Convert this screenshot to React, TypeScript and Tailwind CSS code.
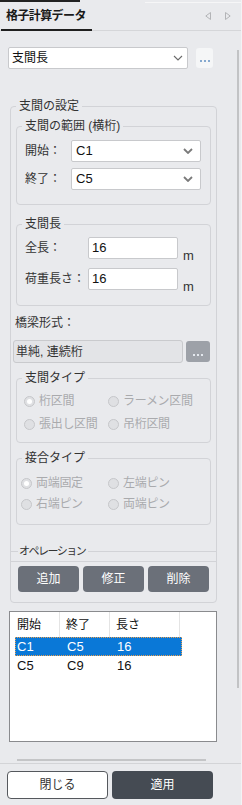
import type { ReactNode } from "react";

const Chevron = ({ bold = false }: { bold?: boolean }) => (
  <svg width="10" height="6" viewBox="0 0 10 6" className="shrink-0">
    <polyline
      points="1,1 5,5 9,1"
      fill="none"
      stroke={bold ? "#7a7a7a" : "#6a6a6a"}
      strokeWidth={bold ? 1.8 : 1.1}
    />
  </svg>
);

const Dots = ({ color }: { color: string }) => (
  <div className="flex gap-[2px]">
    {[0, 1, 2].map((i) => (
      <span key={i} className="block w-[2px] h-[2px]" style={{ backgroundColor: color }} />
    ))}
  </div>
);

function Group({ title, children, className = "" }: { title: string; children: ReactNode; className?: string }) {
  return (
    <fieldset className={`ml-[5px] w-[195px] border border-[#d2d3d7] rounded-[4px] ${className}`}>
      <legend className="ml-[5px] px-[3px] text-[12px] leading-[16px] text-[#333] whitespace-nowrap">{title}</legend>
      {children}
    </fieldset>
  );
}

function Radio({ label, checked = false }: { label: string; checked?: boolean }) {
  return (
    <div className="flex items-center gap-[4px] h-[16px]">
      <span className="w-[11px] h-[11px] rounded-full border border-[#c6c7ca] bg-[#dfe0e3] flex items-center justify-center">
        {checked && <span className="w-[5px] h-[5px] rounded-full bg-white" />}
      </span>
      <span className="text-[12px] leading-[16px] text-[#a9aaad] whitespace-nowrap tracking-[-0.3px]">{label}</span>
    </div>
  );
}

function SelectRow({ label, value }: { label: string; value: string }) {
  return (
    <div className="flex items-center">
      <span className="w-[46px] text-[12px] leading-[16px] text-[#333] whitespace-nowrap">{label}</span>
      <div className="flex-1 h-[22px] bg-white border border-[#c8c9cc] rounded-[2px] flex items-center justify-between pl-[4px] pr-[7px]">
        <span className="text-[13px] leading-[16px] text-[#111]">{value}</span>
        <Chevron bold />
      </div>
    </div>
  );
}

function LengthRow({ label, value }: { label: string; value: string }) {
  return (
    <div className="flex items-center">
      <span className="w-[63px] text-[12px] leading-[16px] text-[#333] whitespace-nowrap">{label}</span>
      <div className="w-[90px] h-[22px] bg-white border border-[#c8c9cc] rounded-[2px] flex items-center pl-[3px]">
        <span className="text-[13px] leading-[16px] text-[#111]">{value}</span>
      </div>
      <span className="ml-[5px] self-end mb-[-3px] text-[13px] leading-[13px] text-[#333]">m</span>
    </div>
  );
}

const rows = [
  { start: "C1", end: "C5", len: "16", selected: true },
  { start: "C5", end: "C9", len: "16", selected: false },
];

export default function App() {
  return (
    <div className="relative w-[242px] h-[805px] overflow-hidden bg-[#e9eaed] border-r border-[#f3f3f5] font-['Liberation_Sans','Noto_Sans_CJK_JP',sans-serif] text-[#222]">
      {/* top strip */}
      <div className="flex h-[3px]">
        <div className="w-[80px] h-[2px] bg-[#222]" />
        <div className="ml-auto w-[96px] h-px mt-[2px] bg-[#f6f6f7]" />
      </div>

      {/* tab header */}
      <div className="flex h-[28px] border-b border-[#d5d6d9]">
        <div className="ml-[1px] w-[91px] h-[28px] pl-[5px] border-b-2 border-[#1f1f1f] flex items-center">
          <span className="text-[12px] leading-[16px] font-bold text-[#1a1a1a] whitespace-nowrap tracking-[-0.6px]">格子計算データ</span>
        </div>
        <div className="ml-auto mr-[10px] flex items-center gap-[14px] pb-[1px]">
          <svg width="6" height="8" viewBox="0 0 6 8">
            <polygon points="5.5,0.5 0.8,4 5.5,7.5" fill="none" stroke="#b3b4b7" strokeWidth="1" />
          </svg>
          <svg width="6" height="8" viewBox="0 0 6 8">
            <polygon points="0.5,0.5 5.2,4 0.5,7.5" fill="none" stroke="#b3b4b7" strokeWidth="1" />
          </svg>
        </div>
      </div>

      {/* main select */}
      <div className="flex items-start mt-[16px] ml-[8px]">
        <div className="w-[180px] h-[22px] bg-white border border-[#c8c9cc] rounded-[2px] flex items-center justify-between pl-[3px] pr-[4px]">
          <span className="text-[12px] leading-[16px] text-[#111]">支間長</span>
          <Chevron />
        </div>
        <div className="ml-[8px] mt-[1px] w-[17px] h-[20px] rounded-[3px] bg-[#f5f6f7] flex items-end justify-center pb-[6px]">
          <Dots color="#86a9cf" />
        </div>
      </div>

      {/* 支間の設定 */}
      <fieldset className="mt-[29px] ml-[10px] w-[207px] border border-[#d2d3d7] rounded-[4px] pb-[10px]">
        <legend className="ml-[5px] px-[3px] text-[12px] leading-[16px] text-[#333]">支間の設定</legend>

        <Group title="支間の範囲 (横桁)" className="mt-[4px]">
          <div className="flex flex-col gap-[6px] pt-[6px] pl-[8px] pr-[9px] pb-[14px]">
            <SelectRow label="開始：" value="C1" />
            <SelectRow label="終了：" value="C5" />
          </div>
        </Group>

        <Group title="支間長" className="mt-[11px]">
          <div className="flex flex-col gap-[9px] pt-[5px] pl-[8px] pb-[15px]">
            <LengthRow label="全長：" value="16" />
            <LengthRow label="荷重長さ：" value="16" />
          </div>
        </Group>

        <div className="mt-[8px] ml-[4px] text-[12px] leading-[18px] text-[#333]">橋梁形式：</div>
        <div className="flex items-start mt-[8px] ml-[2px]">
          <div className="w-[170px] h-[23px] bg-[#e3e4e7] border border-[#c9cacd] rounded-[3px] flex items-center pl-[2px]">
            <span className="text-[12px] leading-[16px] text-[#333]">単純, 連続桁</span>
          </div>
          <div className="ml-[3px] mt-[1px] w-[24px] h-[21px] rounded-[3px] bg-[#9da1a8] flex items-end justify-center pb-[6px]">
            <Dots color="#e4e8ee" />
          </div>
        </div>

        <Group title="支間タイプ" className="mt-[7px]">
          <div className="grid grid-cols-[84px_1fr] gap-y-[7px] pt-[7px] pl-[7px] pb-[10px]">
            <Radio label="桁区間" checked />
            <Radio label="ラーメン区間" />
            <Radio label="張出し区間" />
            <Radio label="吊桁区間" />
          </div>
        </Group>

        <Group title="接合タイプ" className="mt-[7px]">
          <div className="grid grid-cols-[87px_1fr] gap-y-[5px] pt-[9px] pl-[4px] pb-[12px]">
            <Radio label="両端固定" checked />
            <Radio label="左端ピン" />
            <Radio label="右端ピン" />
            <Radio label="両端ピン" />
          </div>
        </Group>

        {/* オペレーション */}
        <div className="mt-[19px] flex items-center h-[14px]">
          <div className="w-[7px] h-px bg-[#d2d3d7]" />
          <span className="ml-[1px] text-[11px] leading-[14px] text-[#333] tracking-[-1.5px] whitespace-nowrap">オペレーション</span>
          <div className="flex-1 ml-[3px] h-px bg-[#d2d3d7]" />
        </div>
        <div className="mt-[3px] h-px bg-[#d2d3d7]" />
        <div className="flex gap-[4px] mt-[4px] ml-[7px]">
          {["追加", "修正", "削除"].map((t) => (
            <button
              key={t}
              className="w-[61px] h-[26px] rounded-[4px] bg-[#6b7079] text-white text-[12px] leading-[16px]"
            >
              {t}
            </button>
          ))}
        </div>
      </fieldset>

      {/* list */}
      <div className="mt-[8px] ml-[9px] w-[208px] h-[131px] border border-[#8a8b8e] bg-white">
        <div className="flex h-[25px] text-[12px] leading-[16px] text-[#111]">
          <div className="w-[50px] border-r border-[#e4e4e4] pl-[7px] pt-[5px]">開始</div>
          <div className="w-[50px] border-r border-[#e4e4e4] pl-[6px] pt-[5px]">終了</div>
          <div className="w-[70px] border-r border-[#e4e4e4] pl-[6px] pt-[5px]">長さ</div>
        </div>
        {rows.map((r) => (
          <div
            key={r.start}
            className={`ml-[5px] w-[167px] h-[19px] flex items-center text-[13px] leading-[16px] border ${
              r.selected ? "bg-[#0a78d7] text-white border-dotted border-[#e9a050]" : "border-transparent text-[#111]"
            }`}
          >
            <span className="w-[50px] pl-[1px]">{r.start}</span>
            <span className="w-[50px] pl-[1px]">{r.end}</span>
            <span className="pl-[1px]">{r.len}</span>
          </div>
        ))}
      </div>

      {/* horizontal scrollbar */}
      <div className="mt-[17px] ml-[17px] w-[189px] h-[2px] bg-[#c4c5c7]" />

      {/* footer */}
      <div className="mt-[2px] border-t border-[#d3d4d7] flex gap-[4px] pt-[7px] pl-[7px]">
        <button className="w-[101px] h-[28px] rounded-[4px] bg-white border border-[#55585d] text-[12px] leading-[16px] text-[#333]">
          閉じる
        </button>
        <button className="w-[101px] h-[28px] rounded-[4px] bg-[#454b53] text-[12px] leading-[16px] text-white">
          適用
        </button>
      </div>

      {/* vertical scrollbar */}
      <div className="absolute right-[2px] top-[50px] w-[2px] h-[638px] bg-[#c2c3c5]" />
    </div>
  );
}
